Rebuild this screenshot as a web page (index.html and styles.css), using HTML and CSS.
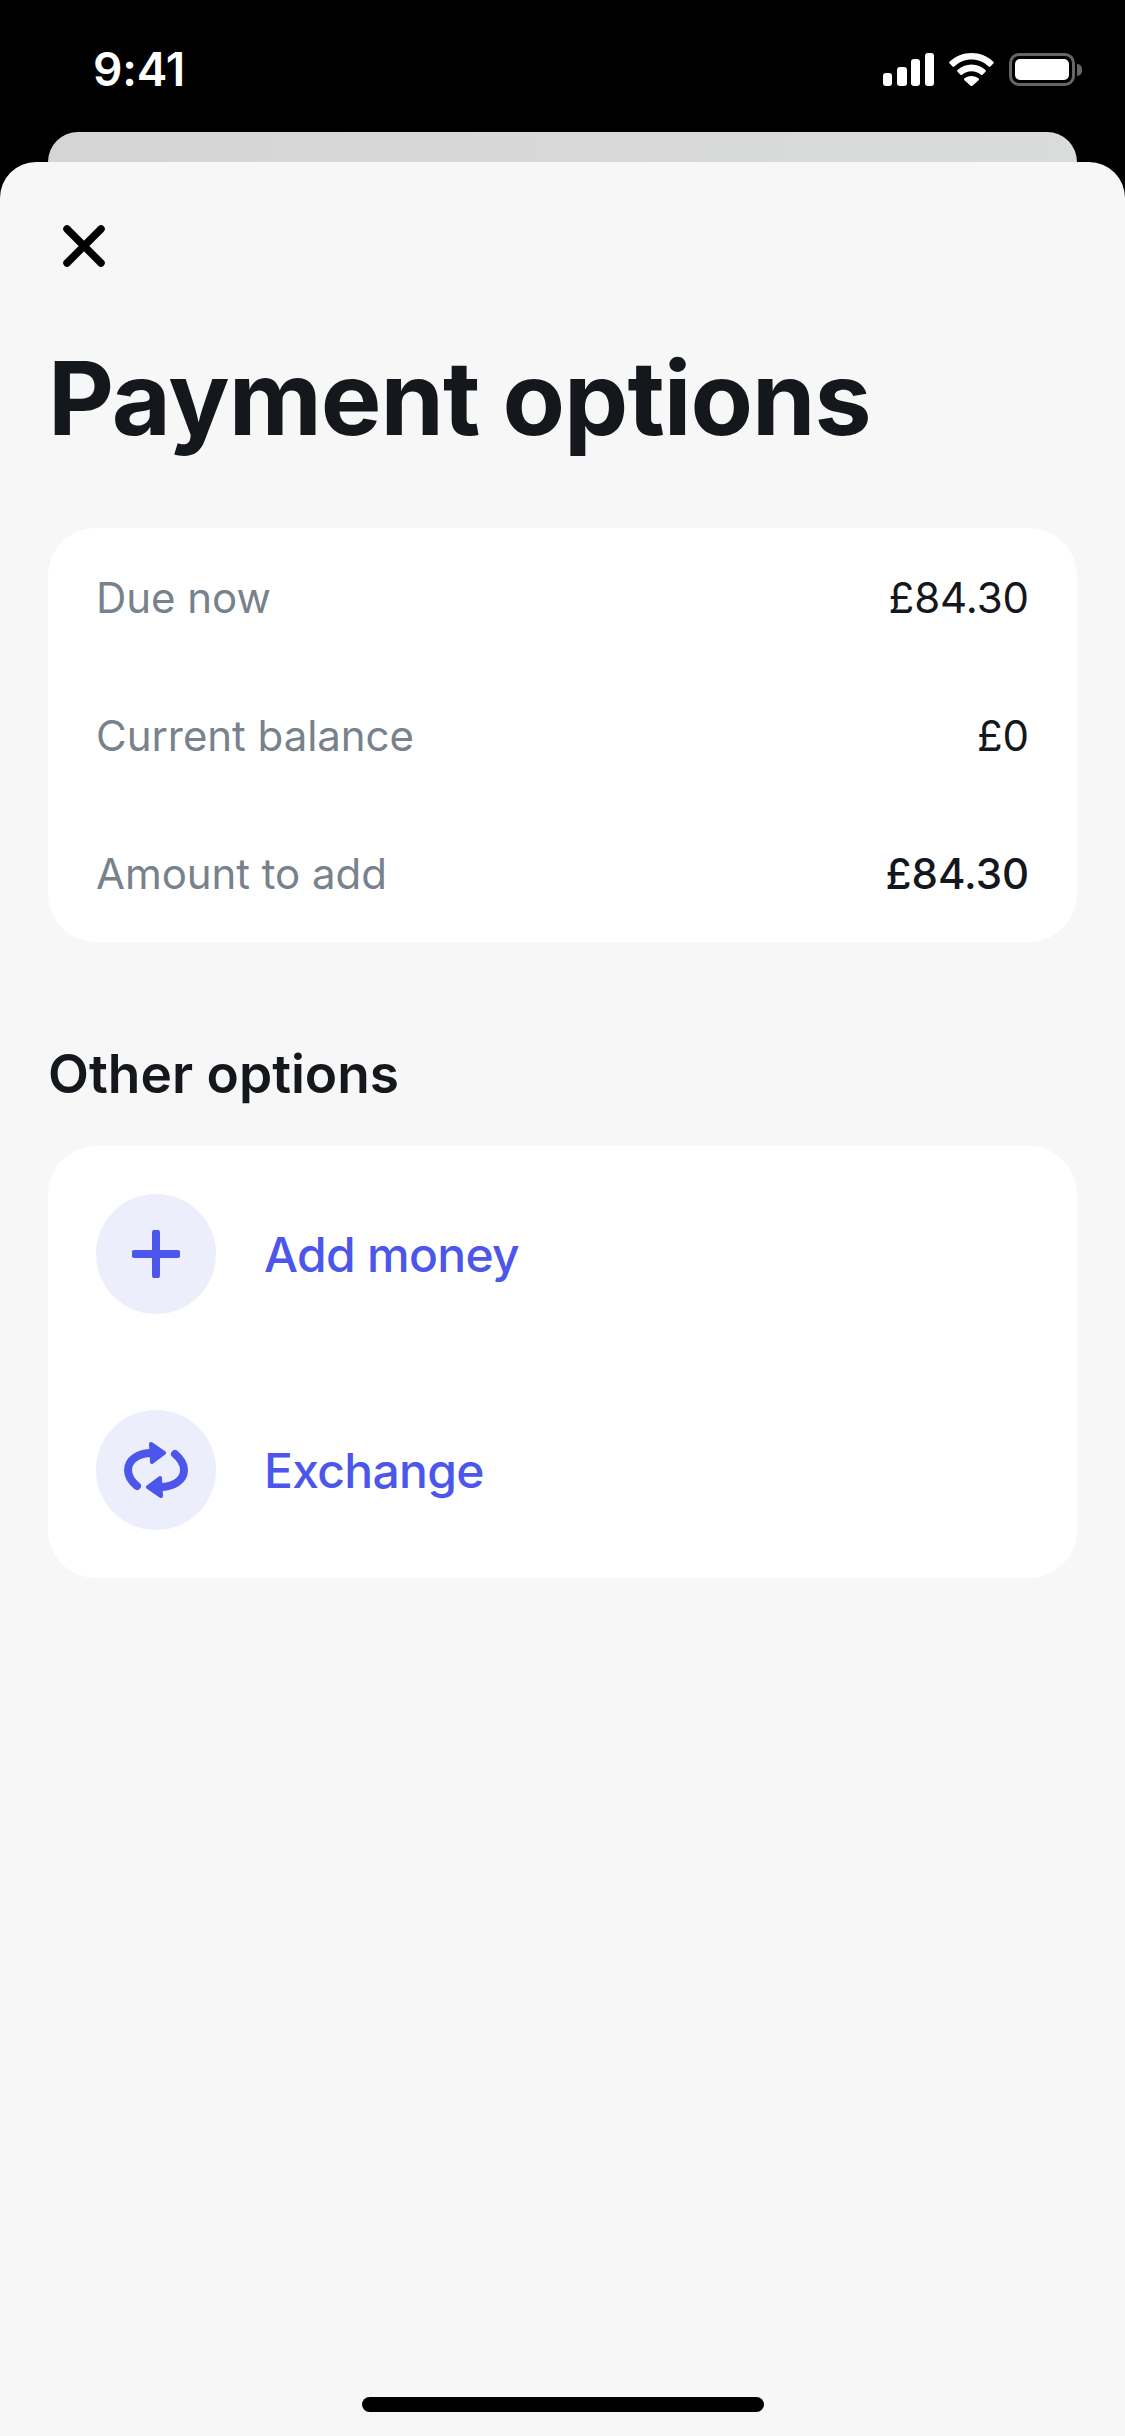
FILE: index.html
```html
<!DOCTYPE html>
<html lang="en">
<head>
<meta charset="utf-8">
<title>Payment options</title>
<link rel="stylesheet" href="styles.css">
</head>
<body>
<div class="screen">
  <header class="status">
    <span class="time">9:41</span>
    <div class="status-icons">
      <svg class="signal" width="51" height="33" viewBox="0 0 51 33"><rect x="0" y="20" width="9" height="13" rx="3"/><rect x="14" y="14" width="10" height="19" rx="3"/><rect x="28" y="6" width="9" height="27" rx="3"/><rect x="42" y="0" width="9" height="33" rx="3"/></svg>
      <svg class="wifi" width="45" height="33" viewBox="0 0 45 33"><path d="M22.5 0C14 0 6.600 3.200 0.600 8.700a1.200 1.200 0 0 0 0 1.700l3 3.100a1.200 1.200 0 0 0 1.700 0C10 9 16 6.500 22.500 6.500S35 9 39.700 13.500a1.200 1.200 0 0 0 1.700 0l3-3.100a1.200 1.200 0 0 0 0-1.700C38.400 3.200 31 0 22.500 0Z"/><path d="M22.500 11.500c-5.500 0-10.300 2.100-14 5.500a1.200 1.200 0 0 0 0 1.700l3 3a1.200 1.200 0 0 0 1.600 0c2.500-2.200 5.800-3.500 9.400-3.500s6.900 1.300 9.400 3.500a1.200 1.200 0 0 0 1.600 0l3-3a1.200 1.200 0 0 0 0-1.700c-3.700-3.400-8.500-5.500-14-5.500Z"/><path d="M22.500 23c-2.900 0-5.400 1-7.100 2.500a1.200 1.200 0 0 0 0 1.700l6.200 5.500a1.300 1.300 0 0 0 1.800 0l6.200-5.500a1.200 1.200 0 0 0 0-1.700C27.900 24 25.400 23 22.500 23Z"/></svg>
      <div class="battery"><div class="battery-body"><div class="battery-fill"></div></div><div class="battery-cap"></div></div>
    </div>
  </header>
  <div class="peek"></div>
  <main class="sheet">
    <button class="close" aria-label="Close">
      <svg width="42" height="42" viewBox="0 0 42 42"><path d="M4 4 38 38M38 4 4 38"/></svg>
    </button>
    <h1 class="title">Payment options</h1>
    <section class="card summary">
      <div class="row"><span class="label">Due now</span><span class="value">£84.30</span></div>
      <div class="row"><span class="label">Current balance</span><span class="value">£0</span></div>
      <div class="row"><span class="label">Amount to add</span><span class="value strong">£84.30</span></div>
    </section>
    <h2 class="subtitle">Other options</h2>
    <section class="card options">
      <div class="option">
        <div class="option-icon">
          <svg width="48" height="48" viewBox="0 0 48 48"><path class="stroke" d="M24 3V45M3 24H45"/></svg>
        </div>
        <span class="option-label">Add money</span>
      </div>
      <div class="option">
        <div class="option-icon">
          <svg width="66" height="60" viewBox="-33 -30 66 60"><path class="stroke" d="M-19 16C-25 11-28 6-28 0C-28-10-18-17-4-17"/><path class="head" d="M-5-26 8-17-4-8Z"/><g transform="rotate(180)"><path class="stroke" d="M-19 16C-25 11-28 6-28 0C-28-10-18-17-4-17"/><path class="head" d="M-5-26 8-17-4-8Z"/></g></svg>
        </div>
        <span class="option-label">Exchange</span>
      </div>
    </section>
    <div class="home-indicator"></div>
  </main>
</div>
</body>
</html>
```
FILE: styles.css
```css
* { box-sizing: border-box; }
html, body { margin: 0; padding: 0; }
body { background: #000; font-family: Inter, "Noto Sans", sans-serif; }
.screen { width: 1125px; height: 2436px; display: flex; flex-direction: column; background: #000; overflow: hidden; }

.status { height: 132px; flex: none; display: flex; justify-content: space-between; align-items: flex-start; padding: 45px 43px 0 93px; }
.time { color: #fff; font-size: 46px; font-weight: 600; line-height: 48px; letter-spacing: -0.2px; }
.status-icons { display: flex; align-items: center; gap: 15px; padding-top: 8px; }
.signal, .wifi { fill: #fff; display: block; }
.signal { margin-left: -1px; }
.battery { display: flex; align-items: center; gap: 2px; }
.battery-body { width: 66px; height: 33px; border: 3px solid #666; border-radius: 10px; padding: 3px; }
.battery-fill { width: 100%; height: 100%; background: #fff; border-radius: 5px; }
.battery-cap { width: 5px; height: 12px; background: #666; border-radius: 0 6px 6px 0; }

.peek { height: 30px; flex: none; margin: 0 48px; background: linear-gradient(90deg, #d5d5d5, #dadbdb); border-radius: 30px 30px 0 0; }

.sheet { flex: 1; display: flex; flex-direction: column; background: #f7f7f7; border-radius: 36px 36px 0 0; padding: 0 48px; }
.close { align-self: flex-start; width: 42px; height: 42px; margin: 63px 0 0 15px; padding: 0; border: 0; background: none; }
.close svg { display: block; }
.close path { fill: none; stroke: #000; stroke-width: 7.500; stroke-linecap: round; }

.title { margin: 71px 0 0; color: #14171c; font-size: 102px; font-weight: 700; line-height: 120px; letter-spacing: -1px; }

.card { background: #fff; border-radius: 48px; }
.summary { margin-top: 70px; padding: 0 48px; }
.row { height: 138px; display: flex; justify-content: space-between; align-items: center; font-size: 42px; letter-spacing: -0.05px; }
.label { color: #78828c; }
.value { color: #14171c; }
.strong { font-weight: 500; }

.subtitle { margin: 102px 0 0; color: #14171c; font-size: 53.250px; font-weight: 600; line-height: 60px; }

.options { margin-top: 42px; padding: 48px; display: flex; flex-direction: column; gap: 96px; }
.option { display: flex; align-items: center; gap: 48px; height: 120px; }
.option-icon { width: 120px; height: 120px; flex: none; border-radius: 50%; background: #eceefc; display: flex; align-items: center; justify-content: center; }
.option-icon svg { display: block; }
.stroke { fill: none; stroke: #4c56ea; stroke-width: 8; stroke-linecap: round; }
.head { fill: #4c56ea; stroke: #4c56ea; stroke-width: 4; stroke-linejoin: round; }
.option-label { color: #4c56ea; font-size: 48px; font-weight: 500; letter-spacing: -0.7px; }

.home-indicator { width: 402px; height: 15px; margin: auto auto 24px; background: #000; border-radius: 8px; }
```
